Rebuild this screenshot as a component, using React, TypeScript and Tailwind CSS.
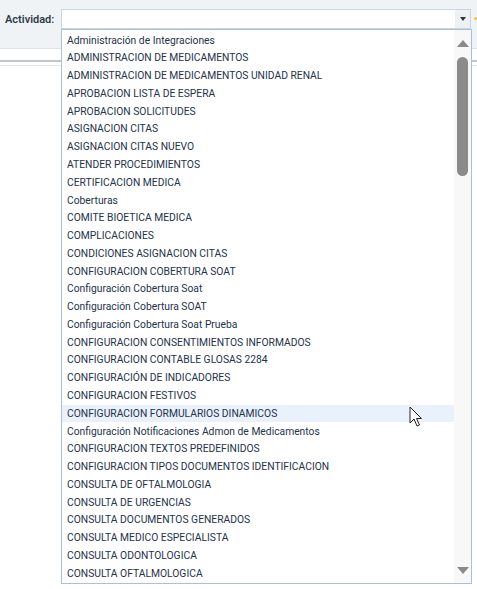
const activities = [
  "Administración de Integraciones",
  "ADMINISTRACION DE MEDICAMENTOS",
  "ADMINISTRACION DE MEDICAMENTOS UNIDAD RENAL",
  "APROBACION LISTA DE ESPERA",
  "APROBACION SOLICITUDES",
  "ASIGNACION CITAS",
  "ASIGNACION CITAS NUEVO",
  "ATENDER PROCEDIMIENTOS",
  "CERTIFICACION MEDICA",
  "Coberturas",
  "COMITE BIOETICA MEDICA",
  "COMPLICACIONES",
  "CONDICIONES ASIGNACION CITAS",
  "CONFIGURACION COBERTURA SOAT",
  "Configuración Cobertura Soat",
  "Configuración Cobertura SOAT",
  "Configuración Cobertura Soat Prueba",
  "CONFIGURACION CONSENTIMIENTOS INFORMADOS",
  "CONFIGURACION CONTABLE GLOSAS 2284",
  "CONFIGURACIÓN DE INDICADORES",
  "CONFIGURACION FESTIVOS",
  "CONFIGURACION FORMULARIOS DINAMICOS",
  "Configuración Notificaciones Admon de Medicamentos",
  "CONFIGURACION TEXTOS PREDEFINIDOS",
  "CONFIGURACION TIPOS DOCUMENTOS IDENTIFICACION",
  "CONSULTA DE OFTALMOLOGIA",
  "CONSULTA DE URGENCIAS",
  "CONSULTA DOCUMENTOS GENERADOS",
  "CONSULTA MEDICO ESPECIALISTA",
  "CONSULTA ODONTOLOGICA",
  "CONSULTA OFTALMOLOGICA",
];

const hovered = "CONFIGURACION FORMULARIOS DINAMICOS";

function Cursor() {
  return (
    <svg width="14" height="22" viewBox="0 0 14 22" className="absolute left-[409px] top-[406px]">
      <path
        d="M1 1 L1 17 L5 13 L8 20 L10.5 19 L7.5 12.5 L12.5 12.5 Z"
        fill="#fff"
        stroke="#222"
        strokeWidth="1"
        strokeLinejoin="round"
      />
    </svg>
  );
}

export default function App() {
  return (
    <div className="relative w-[477px] h-[589px] overflow-hidden bg-white font-['Roboto','Liberation_Sans',sans-serif]">
      {/* Filter bar */}
      <div className="flex h-[49px] items-start border-b border-[#e0e3e6] bg-[#f0f3f5] pt-[9px]">
        <span className="w-[61px] pl-[5px] pt-[3px] text-[11px] font-semibold text-[#2f3a48]">Actividad:</span>
        <div className="flex h-[20px] w-[411px] items-stretch border border-[#c9d5e2] bg-white">
          <div className="flex-1" />
          <div className="flex w-[15px] items-center justify-center bg-[#eef1f4]">
            <span className="h-0 w-0 border-x-[3px] border-t-[4px] border-x-transparent border-t-[#333]" />
          </div>
        </div>
        <span className="ml-[3px] mt-[8px] h-[3px] w-[3px] rounded-full bg-[#f2c230]" />
      </div>

      {/* Panel header lines behind the list */}
      <div className="h-[13px] border-b-2 border-[#c3c6c9]" />
      <div className="h-[4px] border-b border-[#e3e5e7]" />

      {/* Dropdown list */}
      <div className="absolute left-[61px] top-[29px] flex h-[555px] w-[411px] border border-[#aac0d8] bg-white">
        <ul className="flex-1 pt-[1.5px]">
          {activities.map((item) => (
            <li
              key={item}
              className={
                "flex h-[17.77px] items-center whitespace-nowrap pl-[5px] text-[10.3px] text-[#24324a] " +
                (item === hovered ? "bg-[#e9f1fc]" : "")
              }
            >
              {item}
            </li>
          ))}
        </ul>
        <div className="flex w-[17px] flex-col items-center bg-[#f8f8f8] pt-[10px] pb-[9px]">
          <span className="h-0 w-0 border-x-[6px] border-b-[7px] border-x-transparent border-b-[#8a8a8a]" />
          <div className="mt-[10px] h-[119px] w-[11px] rounded-full bg-[#8b8b8b]" />
          <div className="flex-1" />
          <span className="h-0 w-0 border-x-[6px] border-t-[7px] border-x-transparent border-t-[#8a8a8a]" />
        </div>
      </div>

      <Cursor />
    </div>
  );
}
